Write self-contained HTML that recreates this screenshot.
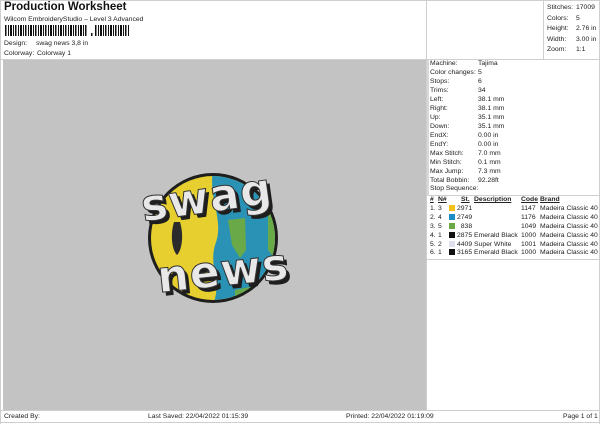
<!DOCTYPE html>
<html><head><meta charset="utf-8">
<style>
*{margin:0;padding:0;box-sizing:border-box}
body{width:600px;height:424px;background:#fff;font-family:"Liberation Sans",sans-serif;color:#222;position:relative;overflow:hidden;font-size:6.8px}
.a{position:absolute;white-space:nowrap}
.h{font-size:11.5px;font-weight:bold;color:#111}
.line{position:absolute;background:#cfcfcf}
.sw{display:inline-block;width:6px;height:6px;vertical-align:-1px;margin-right:2px}
u{text-decoration:underline}
</style></head><body>
<div class="a h" style="left:4px;top:1px">Production Worksheet</div>
<div class="a" style="left:4px;top:16px">Wilcom EmbroideryStudio – Level 3 Advanced</div>
<svg class="a" style="left:5px;top:25px" width="126" height="11">
<g fill="#111">
<rect x="0" y="0" width="1.5" height="11"/><rect x="3" width="1" height="11"/><rect x="5" width="2" height="11"/><rect x="8" width="1" height="11"/><rect x="10" width="1.5" height="11"/><rect x="13" width="1" height="11"/><rect x="15" width="2" height="11"/><rect x="18" width="1" height="11"/><rect x="20" width="1.5" height="11"/><rect x="23" width="1" height="11"/><rect x="25" width="2" height="11"/><rect x="28" width="1" height="11"/><rect x="30" width="1.5" height="11"/><rect x="33" width="1" height="11"/><rect x="35" width="2" height="11"/><rect x="38" width="1" height="11"/><rect x="40" width="1.5" height="11"/><rect x="43" width="1" height="11"/><rect x="45" width="2" height="11"/><rect x="48" width="1" height="11"/><rect x="50" width="1.5" height="11"/><rect x="53" width="1" height="11"/><rect x="55" width="2" height="11"/><rect x="58" width="1" height="11"/><rect x="60" width="1.5" height="11"/><rect x="63" width="1" height="11"/><rect x="65" width="2" height="11"/><rect x="68" width="1" height="11"/><rect x="70" width="1.5" height="11"/><rect x="73" width="1" height="11"/><rect x="75" width="2" height="11"/><rect x="78" width="1" height="11"/><rect x="80" width="1.5" height="11"/>
<rect x="86" y="8" width="1.5" height="3"/>
<rect x="90" width="1.5" height="11"/><rect x="93" width="1" height="11"/><rect x="95" width="2" height="11"/><rect x="98" width="1" height="11"/><rect x="100" width="1.5" height="11"/><rect x="103" width="1" height="11"/><rect x="105" width="2" height="11"/><rect x="108" width="1" height="11"/><rect x="110" width="1.5" height="11"/><rect x="113" width="1" height="11"/><rect x="115" width="2" height="11"/><rect x="118" width="1" height="11"/><rect x="120" width="1.5" height="11"/><rect x="123" width="1" height="11"/>
</g></svg>
<div class="a" style="left:4px;top:40px">Design:</div><div class="a" style="left:36px;top:40px">swag news 3,8 in</div>
<div class="a" style="left:4px;top:50px">Colorway:</div><div class="a" style="left:37px;top:50px">Colorway 1</div>

<div class="line" style="left:0;top:0;width:600px;height:1px"></div>
<div class="line" style="left:0;top:59px;width:600px;height:1px"></div>
<div class="line" style="left:426px;top:0;width:1px;height:410px"></div>
<div class="line" style="left:543px;top:0;width:1px;height:59px"></div>
<div class="line" style="left:599px;top:0;width:1px;height:424px"></div>
<div class="line" style="left:0;top:0;width:1px;height:424px"></div>
<div class="line" style="left:427px;top:195px;width:173px;height:1px"></div>
<div class="line" style="left:427px;top:259px;width:173px;height:1px"></div>
<div class="line" style="left:0;top:410px;width:600px;height:1px"></div>
<div class="line" style="left:0;top:422px;width:600px;height:1px"></div>

<div class="a" style="left:3px;top:60px;width:423px;height:350px;background:#c3c3c3"></div>
<div class="a" style="left:427px;top:60px;width:2px;height:136px;background:#d8d8d8"></div>

<svg class="a" style="left:100px;top:150px" width="220" height="170" viewBox="0 0 220 170">
<defs><clipPath id="c"><circle cx="113" cy="88" r="62"/></clipPath></defs>
<circle cx="113" cy="88" r="65" fill="#1e1e1e"/>
<g clip-path="url(#c)">
<rect x="0" y="0" width="220" height="170" fill="#e6cf2e"/>
<path d="M113 20 C108 50 125 70 115 95 C108 120 125 135 110 160 L220 160 L220 0 L113 0Z" fill="#2a93b5"/>
<path d="M128 70 L145 68 L146 100 L140 108 L132 95Z" fill="#6aa948"/>
<path d="M168 45 L178 60 L176 110 L168 100Z" fill="#6aa948"/>
<path d="M135 140 L150 137 L148 148 L135 150Z" fill="#6aa948"/>
<path d="M74 72 C70 85 72 100 77 105 C82 100 84 85 80 72Z" fill="#2b2b2b"/>
</g>
<g font-family="'DejaVu Sans',sans-serif" font-weight="bold" font-size="44">
<text x="44" y="66" fill="#1e1e1e" transform="rotate(-8 110 50)" letter-spacing="1">swag</text>
<text x="41" y="62" fill="#e8e8e8" stroke="#333" stroke-width="1" transform="rotate(-8 110 50)" letter-spacing="1">swag</text>
<text x="60" y="140" fill="#1e1e1e" transform="rotate(-6 120 120)" letter-spacing="1">news</text>
<text x="57" y="136" fill="#e8e8e8" stroke="#333" stroke-width="1" transform="rotate(-6 120 120)" letter-spacing="1">news</text>
</g>
</svg>

<div class="a" style="left:547px;top:3px;line-height:10.5px">Stitches:<br>Colors:<br>Height:<br>Width:<br>Zoom:</div>
<div class="a" style="left:576px;top:3px;line-height:10.5px">17009<br>5<br>2.76 in<br>3.00 in<br>1:1</div>

<div class="a" style="left:430px;top:59px;line-height:9px">Machine:<br>Color changes:<br>Stops:<br>Trims:<br>Left:<br>Right:<br>Up:<br>Down:<br>EndX:<br>EndY:<br>Max Stitch:<br>Min Stitch:<br>Max Jump:<br>Total Bobbin:</div>
<div class="a" style="left:478px;top:59px;line-height:9px">Tajima<br>5<br>6<br>34<br>38.1 mm<br>38.1 mm<br>35.1 mm<br>35.1 mm<br>0.00 in<br>0.00 in<br>7.0 mm<br>0.1 mm<br>7.3 mm<br>92.28ft</div>

<div class="a" style="left:430px;top:185px">Stop Sequence:</div>
<div class="a" style="left:430px;top:196px;line-height:8.9px">
<b><u>#</u></b><br>1.<br>2.<br>3.<br>4.<br>5.<br>6.</div>
<div class="a" style="left:438px;top:196px;line-height:8.9px"><b><u>N#</u></b><br>3<br>4<br>5<br>1<br>2<br>1</div>
<div class="a" style="left:449px;top:196px;line-height:8.9px">
<span style="margin-left:12px"><b><u>St.</u></b></span><br>
<span class="sw" style="background:#f2c21b"></span>2971<br>
<span class="sw" style="background:#1b8dc4"></span>2749<br>
<span class="sw" style="background:#6aa948"></span>&nbsp;&nbsp;838<br>
<span class="sw" style="background:#111"></span>2875<br>
<span class="sw" style="background:#dfe0ee"></span>4409<br>
<span class="sw" style="background:#111"></span>3165</div>
<div class="a" style="left:474px;top:196px;line-height:8.9px"><b><u>Description</u></b><br><br><br><br>Emerald Black<br>Super White<br>Emerald Black</div>
<div class="a" style="left:521px;top:196px;line-height:8.9px"><b><u>Code</u></b><br>1147<br>1176<br>1049<br>1000<br>1001<br>1000</div>
<div class="a" style="left:540px;top:196px;line-height:8.9px"><b><u>Brand</u></b><br>Madeira Classic 40<br>Madeira Classic 40<br>Madeira Classic 40<br>Madeira Classic 40<br>Madeira Classic 40<br>Madeira Classic 40</div>

<div class="a" style="left:4px;top:413px">Created By:</div>
<div class="a" style="left:148px;top:413px">Last Saved: 22/04/2022 01:15:39</div>
<div class="a" style="left:346px;top:413px">Printed: 22/04/2022 01:19:09</div>
<div class="a" style="left:563px;top:413px">Page 1 of 1</div>
</body></html>
